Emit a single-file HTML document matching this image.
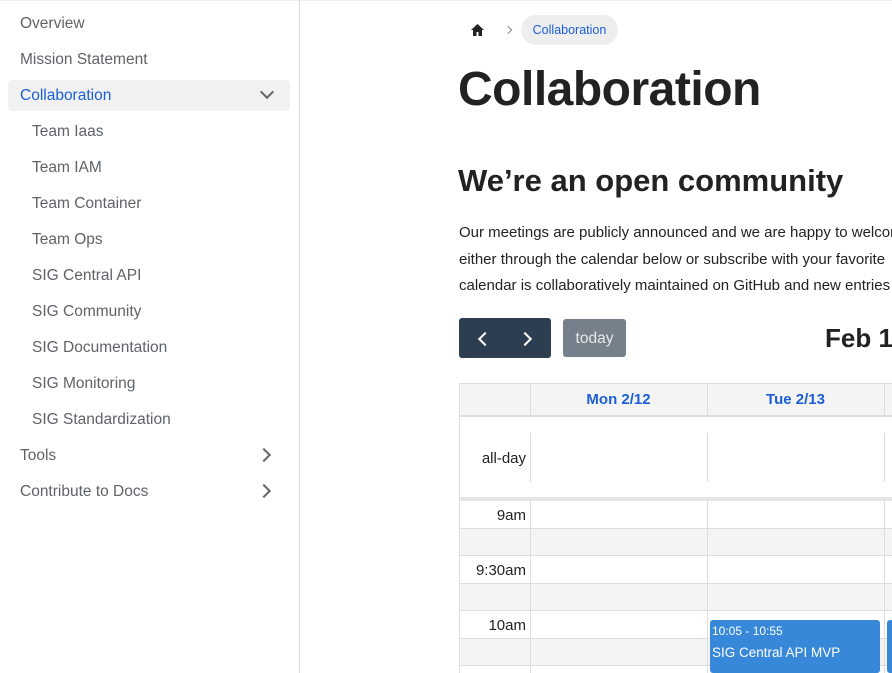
<!DOCTYPE html><html><head><style>
body{margin:0;width:892px;height:673px;overflow:hidden;background:#fff;font-family:"Liberation Sans","DejaVu Sans",sans-serif;position:relative}
.a{position:absolute}
.nav div{position:absolute;font-size:15.5px;color:#5f6368}
.sub{left:32px}
.chev{position:absolute;width:8px;height:8px;border-right:2px solid #666;border-bottom:2px solid #666}
.hl{position:absolute;background:#ddd}
</style></head><body>
<div class="a" style="left:0;top:0;width:892px;height:1px;background:#eee"></div>
<div class="a" style="left:299px;top:0;width:1px;height:673px;background:#ddd"></div>
<div class="a" style="left:8px;top:80px;width:282px;height:31px;background:#f1f1f1;border-radius:4px"></div>
<div class="nav">
<div style="left:20px;top:15px">Overview</div>
<div style="left:20px;top:51px">Mission Statement</div>
<div style="left:20px;top:87px;color:#1a5fd6">Collaboration</div>
<div class="sub" style="top:123px">Team Iaas</div>
<div class="sub" style="top:159px">Team IAM</div>
<div class="sub" style="top:195px">Team Container</div>
<div class="sub" style="top:231px">Team Ops</div>
<div class="sub" style="top:267px">SIG Central API</div>
<div class="sub" style="top:303px">SIG Community</div>
<div class="sub" style="top:339px">SIG Documentation</div>
<div class="sub" style="top:375px">SIG Monitoring</div>
<div class="sub" style="top:411px">SIG Standardization</div>
<div style="left:20px;top:447px">Tools</div>
<div style="left:20px;top:483px">Contribute to Docs</div>
</div>
<div class="chev" style="left:262px;top:87px;transform:rotate(45deg)"></div>
<div class="chev" style="left:259px;top:450px;transform:rotate(-45deg)"></div>
<div class="chev" style="left:259px;top:486px;transform:rotate(-45deg)"></div>
<svg class="a" style="left:470px;top:23px" width="15" height="14" viewBox="0 0 15 14"><path d="M7.5 1L1 7h2v6h3.5V9h2v4H12V7h2z" fill="#222"/></svg>
<div class="chev" style="left:505px;top:27px;width:5px;height:5px;border-width:1.5px;border-color:#888;transform:rotate(-45deg)"></div>
<div class="a" style="left:521px;top:15px;width:97px;height:30px;background:#eee;border-radius:15px;font-size:12.5px;color:#1a5fd6;line-height:30px;text-align:center">Collaboration</div>
<div class="a" style="left:458px;top:62px;font-size:48px;font-weight:bold;color:#222;letter-spacing:-0.5px">Collaboration</div>
<div class="a" style="left:458px;top:163px;font-size:31px;font-weight:bold;color:#222">We’re an open community</div>
<div class="a" style="left:459px;top:220px;font-size:15px;color:#222;line-height:26.5px;white-space:nowrap">Our meetings are publicly announced and we are happy to welcome<br>either through the calendar below or subscribe with your favorite<br>calendar is collaboratively maintained on GitHub and new entries</div>
<div class="a" style="left:459px;top:318px;width:92px;height:40px;background:#2c3e50;border-radius:3px"></div>
<div class="chev" style="left:480px;top:334px;border-color:#fff;transform:rotate(135deg)"></div>
<div class="chev" style="left:520px;top:334px;border-color:#fff;transform:rotate(-45deg)"></div>
<div class="a" style="left:563px;top:319px;width:63px;height:38px;background:#76808b;border-radius:3px;color:#e8e8e8;font-size:15.5px;line-height:40px;text-align:center">today</div>
<div class="a" style="left:825px;top:323px;font-size:26px;font-weight:bold;color:#222;white-space:nowrap">Feb 1</div>
<div class="a" style="left:459px;top:383px;width:433px;height:33px;background:#f4f4f4"></div>
<div class="a" style="left:459px;top:528px;width:433px;height:28px;background:#f4f4f4"></div>
<div class="a" style="left:459px;top:583px;width:433px;height:28px;background:#f4f4f4"></div>
<div class="a" style="left:459px;top:638px;width:433px;height:28px;background:#f4f4f4"></div>
<div class="hl" style="left:459px;top:383px;width:433px;height:1px"></div>
<div class="hl" style="left:459px;top:415px;width:433px;height:2px"></div>
<div class="hl" style="left:459px;top:497px;width:433px;height:4px;background:#e4e4e4"></div>
<div class="hl" style="left:459px;top:528px;width:433px;height:1px"></div>
<div class="hl" style="left:459px;top:555px;width:433px;height:1px"></div>
<div class="hl" style="left:459px;top:583px;width:433px;height:1px"></div>
<div class="hl" style="left:459px;top:610px;width:433px;height:1px"></div>
<div class="hl" style="left:459px;top:638px;width:433px;height:1px"></div>
<div class="hl" style="left:459px;top:665px;width:433px;height:1px"></div>
<div class="hl" style="left:459px;top:383px;width:1px;height:290px"></div>
<div class="hl" style="left:530px;top:383px;width:1px;height:33px"></div>
<div class="hl" style="left:707px;top:383px;width:1px;height:33px"></div>
<div class="hl" style="left:884px;top:383px;width:1px;height:33px"></div>
<div class="hl" style="left:530px;top:433px;width:1px;height:49px"></div>
<div class="hl" style="left:707px;top:433px;width:1px;height:49px"></div>
<div class="hl" style="left:884px;top:433px;width:1px;height:49px"></div>
<div class="hl" style="left:530px;top:501px;width:1px;height:172px"></div>
<div class="hl" style="left:707px;top:501px;width:1px;height:172px"></div>
<div class="hl" style="left:884px;top:501px;width:1px;height:172px"></div>
<div class="a" style="left:530px;top:391px;width:177px;text-align:center;font-size:15px;font-weight:bold;color:#1a5fd6">Mon 2/12</div>
<div class="a" style="left:707px;top:391px;width:177px;text-align:center;font-size:15px;font-weight:bold;color:#1a5fd6">Tue 2/13</div>
<div class="a" style="left:459px;top:450px;width:67px;text-align:right;font-size:15px;color:#222">all-day</div>
<div class="a" style="left:459px;top:507px;width:67px;text-align:right;font-size:15px;color:#222">9am</div>
<div class="a" style="left:459px;top:562px;width:67px;text-align:right;font-size:15px;color:#222">9:30am</div>
<div class="a" style="left:459px;top:617px;width:67px;text-align:right;font-size:15px;color:#222">10am</div>
<div class="a" style="left:710px;top:620px;width:170px;height:53px;background:#3788d8;border-radius:3px;color:#fff">
<div style="font-size:12px;margin:4px 0 0 2px">10:05 - 10:55</div>
<div style="font-size:13.5px;margin:7px 0 0 2px">SIG Central API MVP</div></div>
<div class="a" style="left:887px;top:620px;width:5px;height:53px;background:#3788d8;border-radius:3px 0 0 3px"></div>
</body></html>
